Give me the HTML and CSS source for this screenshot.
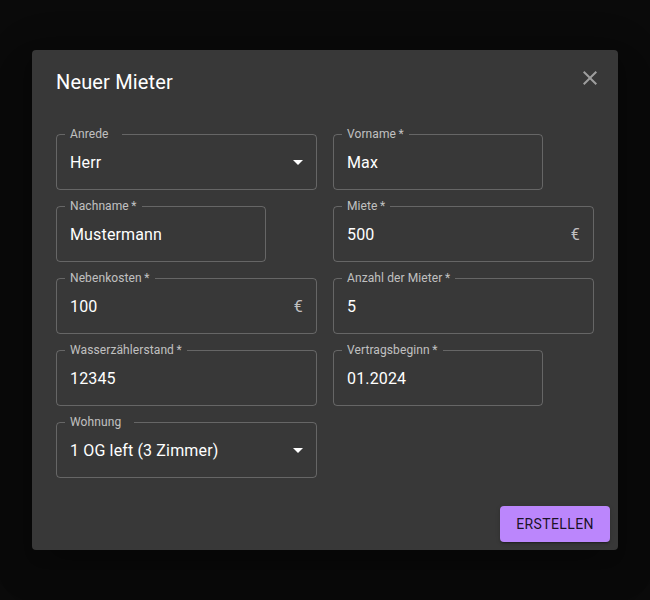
FILE: index.html
```html
<!DOCTYPE html>
<html lang="de">
<head>
<meta charset="utf-8">
<title>Neuer Mieter</title>
<link rel="stylesheet" href="styles.css">
</head>
<body>
<div class="dialog">
  <div class="title-row">
    <h2 class="title">Neuer Mieter</h2>
    <button class="close" aria-label="close">
      <svg viewBox="0 0 24 24" width="24" height="24"><path d="M19 6.41 17.59 5 12 10.59 6.41 5 5 6.41 10.59 12 5 17.59 6.41 19 12 13.41 17.59 19 19 17.59 13.41 12z" fill="currentColor"/></svg>
    </button>
  </div>
  <div class="content">
    <div class="grid">
      <div class="field select">
        <span class="label select-label">Anrede</span>
        <span class="value">Herr</span>
        <svg class="arrow" viewBox="0 0 24 24" width="24" height="24"><path d="M7 10l5 5 5-5z" fill="currentColor"/></svg>
      </div>
      <div class="field narrow">
        <span class="label">Vorname&thinsp;*</span>
        <span class="value">Max</span>
      </div>
      <div class="field narrow">
        <span class="label">Nachname&thinsp;*</span>
        <span class="value">Mustermann</span>
      </div>
      <div class="field">
        <span class="label">Miete&thinsp;*</span>
        <span class="value">500</span>
        <span class="adorn">€</span>
      </div>
      <div class="field">
        <span class="label">Nebenkosten&thinsp;*</span>
        <span class="value">100</span>
        <span class="adorn">€</span>
      </div>
      <div class="field">
        <span class="label">Anzahl der Mieter&thinsp;*</span>
        <span class="value">5</span>
      </div>
      <div class="field">
        <span class="label">Wasserzählerstand&thinsp;*</span>
        <span class="value">12345</span>
      </div>
      <div class="field narrow">
        <span class="label">Vertragsbeginn&thinsp;*</span>
        <span class="value">01.2024</span>
      </div>
      <div class="field select">
        <span class="label select-label">Wohnung</span>
        <span class="value">1 OG left (3 Zimmer)</span>
        <svg class="arrow" viewBox="0 0 24 24" width="24" height="24"><path d="M7 10l5 5 5-5z" fill="currentColor"/></svg>
      </div>
    </div>
  </div>
  <div class="actions">
    <button class="btn">Erstellen</button>
  </div>
</div>
</body>
</html>
```

FILE: styles.css
```css
* { box-sizing: border-box; }
html, body { margin: 0; padding: 0; }
body {
  background: #0a0a0a;
  height: 600px;
  display: flex;
  align-items: center;
  justify-content: center;
  font-family: Roboto, "Liberation Sans", sans-serif;
  color: #fff;
}
.dialog {
  width: 586px;
  height: 500px;
  background: #383838;
  border-radius: 4px;
  box-shadow: 0 11px 15px -7px rgba(0,0,0,0.2), 0 24px 38px 3px rgba(0,0,0,0.14), 0 9px 46px 8px rgba(0,0,0,0.12);
  display: flex;
  flex-direction: column;
  position: relative;
}
.title-row {
  padding: 16px 24px;
}
.title {
  margin: 0;
  font-size: 20px;
  font-weight: 400;
  line-height: 32px;
  letter-spacing: 0.15px;
}
.close {
  position: absolute;
  top: 8px;
  right: 8px;
  width: 40px;
  height: 40px;
  padding: 8px;
  border: 0;
  background: none;
  color: #9e9e9e;
  display: flex;
}
.content {
  padding: 20px 24px;
  flex: 1;
}
.grid {
  display: grid;
  grid-template-columns: 261px 261px;
  column-gap: 16px;
  row-gap: 16px;
}
.field {
  position: relative;
  height: 56px;
  border: 1px solid rgba(255,255,255,0.23);
  border-radius: 4px;
  display: flex;
  align-items: center;
  padding: 0 13px;
  font-size: 16px;
  letter-spacing: 0.15px;
}
.field.narrow { width: 210px; }
.label {
  position: absolute;
  top: -7px;
  left: 8px;
  padding: 0 5px;
  font-size: 12px;
  line-height: 12px;
  background: #383838;
  color: rgba(255,255,255,0.7);
  letter-spacing: 0.1px;
  white-space: nowrap;
}
.select-label { padding-right: 13px; }
.value {
  flex: 1;
  line-height: 23px;
  color: #fff;
}
.adorn {
  color: rgba(255,255,255,0.7);
  margin-left: 8px;
  line-height: 23px;
}
.arrow {
  position: absolute;
  right: 6px;
  top: 15px;
  color: #fff;
}
.actions {
  padding: 8px;
  display: flex;
  justify-content: flex-end;
}
.btn {
  height: 36px;
  padding: 6px 16px;
  border: 0;
  border-radius: 4px;
  background: #bb86fc;
  color: rgba(0,0,0,0.87);
  font-family: Roboto, "Liberation Sans", sans-serif;
  font-size: 14px;
  font-weight: 400;
  letter-spacing: 0.4px;
  text-transform: uppercase;
  line-height: 24px;
  box-shadow: 0 3px 1px -2px rgba(0,0,0,0.2), 0 2px 2px 0 rgba(0,0,0,0.14), 0 1px 5px 0 rgba(0,0,0,0.12);
}
```
